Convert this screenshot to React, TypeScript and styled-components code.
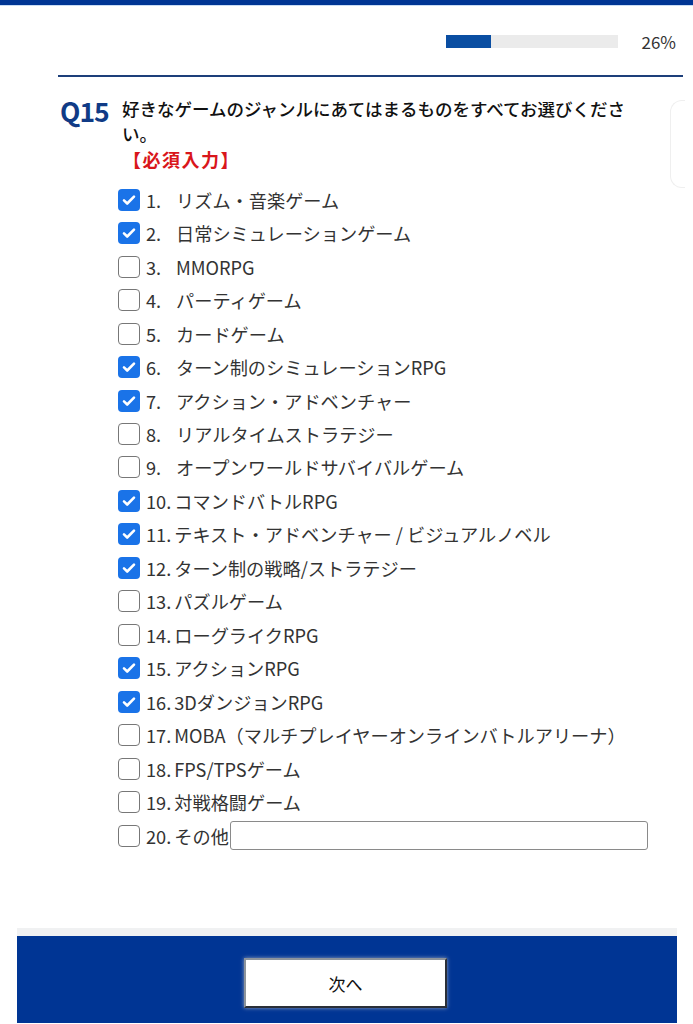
import styled, { createGlobalStyle } from "styled-components";

const options: { label: string; checked: boolean }[] = [
  { label: "リズム・音楽ゲーム", checked: true },
  { label: "日常シミュレーションゲーム", checked: true },
  { label: "MMORPG", checked: false },
  { label: "パーティゲーム", checked: false },
  { label: "カードゲーム", checked: false },
  { label: "ターン制のシミュレーションRPG", checked: true },
  { label: "アクション・アドベンチャー", checked: true },
  { label: "リアルタイムストラテジー", checked: false },
  { label: "オープンワールドサバイバルゲーム", checked: false },
  { label: "コマンドバトルRPG", checked: true },
  { label: "テキスト・アドベンチャー / ビジュアルノベル", checked: true },
  { label: "ターン制の戦略/ストラテジー", checked: true },
  { label: "パズルゲーム", checked: false },
  { label: "ローグライクRPG", checked: false },
  { label: "アクションRPG", checked: true },
  { label: "3DダンジョンRPG", checked: true },
  { label: "MOBA（マルチプレイヤーオンラインバトルアリーナ）", checked: false },
  { label: "FPS/TPSゲーム", checked: false },
  { label: "対戦格闘ゲーム", checked: false },
  { label: "その他", checked: false },
];

const GlobalStyle = createGlobalStyle`
  body {
    margin: 0;
    background: #ffffff;
    font-family: "Noto Sans CJK JP", "Noto Sans", sans-serif;
    color: #333333;
  }
`;

const App = () => {
  const progress = 26;

  return (
    <Page>
      <GlobalStyle />
      <TopBar />
      <ProgressRow>
        <Track>
          <Fill style={{ width: `${progress}%` }} />
        </Track>
        <Percent>{progress}%</Percent>
      </ProgressRow>
      <Divider />

      <Question>
        <QNumber>Q15</QNumber>
        <QBody>
          <QTitle>好きなゲームのジャンルにあてはまるものをすべてお選びください。</QTitle>
          <Required>【必須入力】</Required>
        </QBody>
      </Question>

      <OptionList>
        {options.map((opt, i) => (
          <OptionRow key={opt.label}>
            <Box $checked={opt.checked}>
              {opt.checked && (
                <svg width="16" height="16" viewBox="0 0 16 16">
                  <path
                    d="M3 8.4l3.2 3.1L13 4.6"
                    fill="none"
                    stroke="#fff"
                    strokeWidth="2.6"
                    strokeLinecap="round"
                    strokeLinejoin="round"
                  />
                </svg>
              )}
            </Box>
            <Num $wide={i >= 9}>{i + 1}.</Num>
            <Label>{opt.label}</Label>
            {i === options.length - 1 && <OtherInput type="text" />}
          </OptionRow>
        ))}
      </OptionList>

      <SidePanel />

      <Footer>
        <FooterStrip />
        <FooterBar>
          <NextButton>次へ</NextButton>
        </FooterBar>
      </Footer>
    </Page>
  );
};

const Page = styled.div`
  position: relative;
  width: 693px;
  min-height: 1024px;
  overflow: hidden;
`;

const TopBar = styled.div`
  height: 5px;
  background: #003594;
  border-bottom: 1px solid #c9dcf4;
`;

const ProgressRow = styled.div`
  display: flex;
  align-items: center;
  justify-content: flex-end;
  padding: 23px 17px 0 0;
  height: 25px;
`;

const Track = styled.div`
  width: 172px;
  height: 13px;
  background: #ebebeb;
`;

const Fill = styled.div`
  height: 100%;
  background: #0a4ea2;
`;

const Percent = styled.span`
  margin-left: 20px;
  width: 38px;
  text-align: right;
  font-size: 17px;
  color: #333;
`;

const Divider = styled.div`
  margin: 21px 10px 0 58px;
  height: 2px;
  background: #1d3f7a;
`;

const Question = styled.div`
  display: flex;
  align-items: flex-start;
  padding: 17px 40px 0 60px;
`;

const QNumber = styled.div`
  width: 62px;
  flex-shrink: 0;
  font-size: 26.5px;
  font-weight: 700;
  color: #103b86;
  line-height: 34px;
  letter-spacing: -1px;
`;

const QBody = styled.div`
  display: flex;
  flex-direction: column;
`;

const QTitle = styled.div`
  font-size: 17.5px;
  font-weight: 500;
  color: #111;
  line-height: 25px;
  padding-top: 2px;
`;

const Required = styled.div`
  font-size: 18px;
  font-weight: 700;
  color: #d9161b;
  line-height: 26px;
  margin-left: 1px;
  letter-spacing: 1.5px;
`;

const OptionList = styled.ul`
  list-style: none;
  margin: 11px 0 0;
  padding: 0 0 0 118px;
  display: flex;
  flex-direction: column;
`;

const OptionRow = styled.li`
  display: flex;
  align-items: center;
  height: 33.47px;
  font-size: 18.2px;
  color: #333;
`;

const Box = styled.span<{ $checked: boolean }>`
  width: 22px;
  height: 22px;
  box-sizing: border-box;
  border-radius: 4px;
  display: inline-flex;
  align-items: center;
  justify-content: center;
  flex-shrink: 0;
  margin-right: 6px;
  background: ${(p) => (p.$checked ? "#1a73e8" : "#fff")};
  border: ${(p) => (p.$checked ? "none" : "1.5px solid #777")};
`;

const Num = styled.span<{ $wide: boolean }>`
  display: inline-block;
  min-width: ${(p) => (p.$wide ? "auto" : "30px")};
  margin-right: ${(p) => (p.$wide ? "3px" : "0")};
`;

const Label = styled.span`
  white-space: nowrap;
`;

const OtherInput = styled.input`
  margin-left: 1px;
  width: 418px;
  height: 29px;
  box-sizing: border-box;
  border: 1px solid #8a8a8a;
  border-radius: 3px;
  background: #fff;
`;

const SidePanel = styled.div`
  position: absolute;
  top: 100px;
  right: 8px;
  width: 14px;
  height: 86px;
  border: 1px solid #efefef;
  border-right: none;
  border-radius: 12px 0 0 12px;
`;

const Footer = styled.div`
  margin: 76px 16px 0 17px;
`;

const FooterStrip = styled.div`
  height: 8px;
  background: #f0f1f2;
`;

const FooterBar = styled.div`
  background: #003594;
  height: 87px;
  display: flex;
  justify-content: center;
  padding-top: 22px;
  box-sizing: border-box;
`;

const NextButton = styled.button`
  width: 203px;
  height: 50px;
  background: #fff;
  border: 2px solid #2a2f38;
  border-top-color: #8d949c;
  border-left-color: #8d949c;
  box-shadow: 0 0 4px rgba(160, 170, 190, 0.9);
  font-family: "Noto Sans CJK JP", sans-serif;
  font-size: 17px;
  color: #111;
  margin-left: -3px;
`;

export default App;
